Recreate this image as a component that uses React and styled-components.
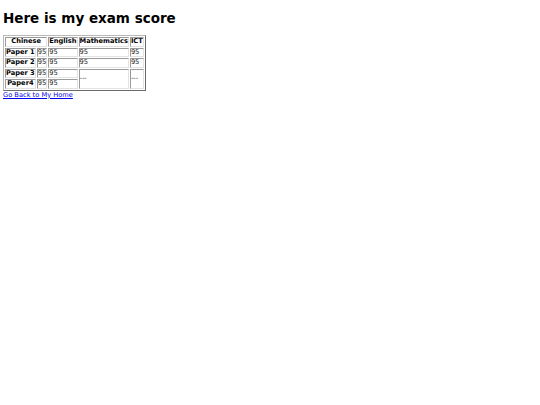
import React from 'react'
import styled, { createGlobalStyle } from 'styled-components';

const GlobalStyle = createGlobalStyle`
  body {
    margin: 3px;
    font-family: "DejaVu Sans", Verdana, sans-serif;
    font-size: 6.67px;
    color: #000;
    background: #fff;
  }
`;

const Title = styled.h1`
  font-size: 13.5px;
  font-weight: bold;
  margin: 7px 0 9px 0;
`;

const ScoreTable = styled.table`
  border: 1px solid;
  border-color: #b8b8b8 #6a6a6a #6a6a6a #b8b8b8;
  border-spacing: 1px;
`;

const HeadCell = styled.th`
  border: 1px solid;
  border-color: #9a9a9a #e2e2e2 #e2e2e2 #9a9a9a;
  padding: 0;
  font-weight: bold;
  text-align: center;
  line-height: 7.5px;
`;

const Cell = styled.td`
  border: 1px solid;
  border-color: #9a9a9a #e2e2e2 #e2e2e2 #9a9a9a;
  padding: 0;
  color: #222;
  line-height: 7.5px;
`;

const HomeLink = styled.a`
  color: #0000ee;
  text-decoration: underline;
  display: inline-block;
`;

const papers = [
  { name: 'Paper 1', zh: '95', en: '95', math: '95', ict: '95' },
  { name: 'Paper 2', zh: '95', en: '95', math: '95', ict: '95' },
];

function App() {
  return (
    <>
      <GlobalStyle />
      <Title>Here is my exam score</Title>
      <ScoreTable>
        <tbody>
          <tr>
            <HeadCell colSpan={2}>Chinese</HeadCell>
            <HeadCell>English</HeadCell>
            <HeadCell>Mathematics</HeadCell>
            <HeadCell>ICT</HeadCell>
          </tr>
          {papers.map(p => (
            <tr key={p.name}>
              <HeadCell>{p.name}</HeadCell>
              <Cell>{p.zh}</Cell>
              <Cell>{p.en}</Cell>
              <Cell>{p.math}</Cell>
              <Cell>{p.ict}</Cell>
            </tr>
          ))}
          <tr>
            <HeadCell>Paper 3</HeadCell>
            <Cell>95</Cell>
            <Cell>95</Cell>
            <Cell rowSpan={2}>---</Cell>
            <Cell rowSpan={2}>---</Cell>
          </tr>
          <tr>
            <HeadCell>Paper4</HeadCell>
            <Cell>95</Cell>
            <Cell>95</Cell>
          </tr>
        </tbody>
      </ScoreTable>
      <HomeLink href="#">Go Back to My Home</HomeLink>
    </>
  )
}

export default App;
